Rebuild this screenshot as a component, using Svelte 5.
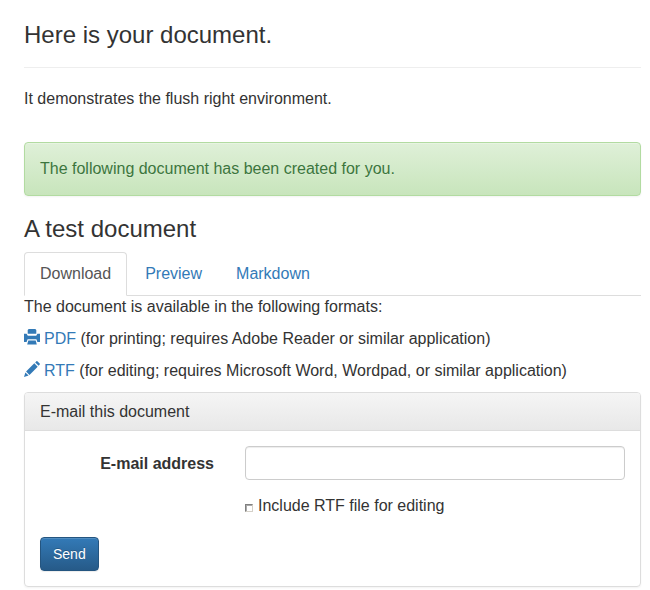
<script>
  const tabs = ['Download', 'Preview', 'Markdown'];
  let active = $state('Download');
  let email = $state('');
</script>

<main>
  <h3>Here is your document.</h3>
  <hr />
  <p class="intro">It demonstrates the flush right environment.</p>
  <div class="alert">The following document has been created for you.</div>
  <h3>A test document</h3>
  <ul class="tabs">
    {#each tabs as tab}
      <li><button class="tab" class:active={active === tab} onclick={() => (active = tab)}>{tab}</button></li>
    {/each}
  </ul>
  <p>The document is available in the following formats:</p>
  <p>
    <svg class="icon" viewBox="0 0 16 16" aria-hidden="true">
      <path d="M4.7 0h6.6l1 1v3.8H3.7V1zM0 4.7h2.6l1.2 2h8.4l1.2-2H16V13h-2.6l-1-2.8H3.6L2.6 13H0zM4.3 11.6h7.4l1.1 3.9H3.2z" />
    </svg>
    <a href="#pdf">PDF</a> (for printing; requires Adobe Reader or similar application)
  </p>
  <p>
    <svg class="icon" viewBox="0 0 16 16" aria-hidden="true">
      <path d="M11.2 1.4 12.4.3q.5-.5 1 0l2.3 2.3q.5.5 0 1L14.6 4.8zM10.3 2.3l3.4 3.4-8.2 8.2-3.4-3.4zM1.4 11.4l3.2 3.2L0 16z" />
    </svg>
    <a href="#rtf">RTF</a> (for editing; requires Microsoft Word, Wordpad, or similar application)
  </p>
  <section class="panel">
    <div class="heading">E-mail this document</div>
    <form class="body" onsubmit={(e) => e.preventDefault()}>
      <div class="row">
        <label class="name" for="email">E-mail address</label>
        <input id="email" class="field" type="text" bind:value={email} />
      </div>
      <label class="check"><input type="checkbox" /><span>Include RTF file for editing</span></label>
      <button class="send" type="submit">Send</button>
    </form>
  </section>
</main>

<style>
  :global(body) { background: #fff; }
  main {
    box-sizing: border-box;
    width: 650px;
    height: 590px;
    overflow: hidden;
    padding: 22px 9px 0 24px;
    font: 16px/22px "Liberation Sans", Arial, sans-serif;
    color: #333;
  }
  h3 { margin: 0; font-size: 24px; font-weight: 400; line-height: 26px; }
  hr { margin: 19px 0 20px; border: 0; border-top: 1px solid #eee; }
  p { margin: 0 0 10px; }
  .intro { margin-bottom: 32px; }
  .alert {
    margin-bottom: 20px;
    padding: 15px;
    border: 1px solid #b2dba1;
    border-radius: 4px;
    color: #3c763d;
    background: linear-gradient(#dff0d8, #c8e5bc);
    box-shadow: inset 0 1px 0 rgba(255, 255, 255, .25), 0 1px 2px rgba(0, 0, 0, .05);
    text-shadow: 0 1px 0 rgba(255, 255, 255, .2);
  }
  .tabs {
    display: flex;
    height: 43px;
    margin: 10px 0 0;
    padding: 0;
    list-style: none;
    border-bottom: 1px solid #ddd;
  }
  .tab {
    height: 44px;
    margin: 0 2px 0 0;
    padding: 10px 15px;
    border: 1px solid transparent;
    border-radius: 4px 4px 0 0;
    background: transparent;
    font: inherit;
    color: #337ab7;
    cursor: pointer;
  }
  .tab.active { color: #555; background: #fff; border-color: #ddd #ddd #fff; }
  .icon { width: 16px; height: 16px; margin-right: -.4px; vertical-align: -1px; fill: #337ab7; }
  a { color: #337ab7; text-decoration: none; }
  .panel {
    box-sizing: border-box;
    height: 195px;
    border: 1px solid #ddd;
    border-radius: 4px;
    box-shadow: 0 1px 2px rgba(0, 0, 0, .05);
  }
  .heading {
    padding: 10px 15px;
    border-bottom: 1px solid #ddd;
    border-radius: 3px 3px 0 0;
    line-height: 17px;
    background: linear-gradient(#f5f5f5, #e8e8e8);
  }
  .body { padding: 15px; }
  .row { display: flex; }
  .name { width: 174px; margin-right: 31px; padding-top: 7px; text-align: right; font-weight: 700; }
  .field {
    box-sizing: border-box;
    flex: 1;
    height: 34px;
    padding: 6px 12px;
    border: 1px solid #ccc;
    border-radius: 4px;
    font: inherit;
    font-size: 14px;
    box-shadow: inset 0 1px 1px rgba(0, 0, 0, .075);
  }
  .check { display: flex; align-items: flex-start; margin: 15px 0 20px 205px; }
  .check input {
    appearance: none;
    box-sizing: border-box;
    width: 8px;
    height: 8px;
    margin: 9px 5px 0 0;
    border: 1px solid;
    border-color: #808080 #d4d0c8 #d4d0c8 #808080;
    box-shadow: inset 1px 1px 0 #aaa;
    background: #fff;
  }
  .send {
    box-sizing: border-box;
    display: block;
    height: 34px;
    padding: 6px 12px;
    border: 1px solid #245580;
    border-radius: 4px;
    font: 14px/20px "Liberation Sans", Arial, sans-serif;
    color: #fff;
    background: linear-gradient(#337ab7, #265a88);
    text-shadow: 0 -1px 0 rgba(0, 0, 0, .2);
    box-shadow: inset 0 1px 0 rgba(255, 255, 255, .15), 0 1px 1px rgba(0, 0, 0, .075);
  }
</style>
